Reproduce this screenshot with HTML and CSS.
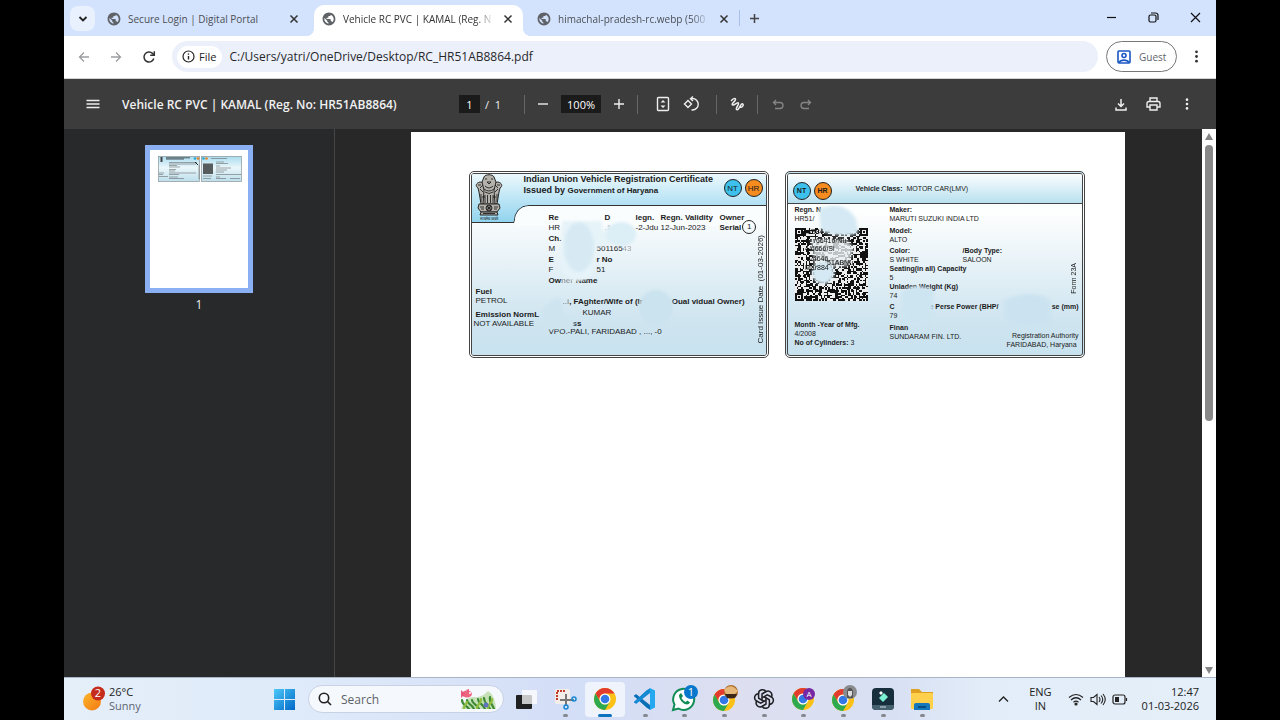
FILE: index.html
```html
<!DOCTYPE html>
<html lang="en">
<head>
<meta charset="utf-8">
<title>Vehicle RC PVC</title>
<link rel="stylesheet" href="styles.css">
</head>
<body>
<svg class="defs" aria-hidden="true">
  <defs>
    <symbol id="globe" viewBox="0 0 24 24"><path fill="#5f6368" d="M12 1C5.9 1 1 5.9 1 12s4.900 11 11 11 11-4.900 11-11S18.100 1 12 1zm-1 18.930c-3.950-.49-7-3.850-7-7.930 0-.62.08-1.210.21-1.790L9 15v1c0 1.100.9 2 2 2v1.930zm6.900-2.540c-.26-.81-1-1.390-1.900-1.390h-1v-3c0-.55-.45-1-1-1H8v-2h2c.55 0 1-.45 1-1V7h2c1.100 0 2-.9 2-2v-.41c2.930 1.190 5 4.060 5 7.410 0 2.080-.8 3.970-2.100 5.390z"/></symbol>
    <symbol id="close" viewBox="0 0 10 10"><path d="M1.500 1.500l7 7M8.500 1.500l-7 7" stroke="currentColor" stroke-width="1.500" fill="none"/></symbol>
    <symbol id="dots" viewBox="0 0 16 16"><g fill="currentColor"><circle cx="8" cy="3" r="1.500"/><circle cx="8" cy="8" r="1.500"/><circle cx="8" cy="13" r="1.500"/></g></symbol>
    <symbol id="chrome" viewBox="0 0 24 24">
      <circle cx="12" cy="12" r="11" fill="#fbc116"/>
      <path d="M2.500 6.500A11 11 0 0 1 21.500 6.500H12A5.500 5.500 0 0 0 7.200 14.800z" fill="#e33b2e"/>
      <path d="M2.500 6.500A11 11 0 0 0 12 23L16.800 14.800A5.500 5.500 0 0 1 7.200 14.800z" fill="#2da94f"/>
      <circle cx="12" cy="12" r="5.500" fill="#fff"/><circle cx="12" cy="12" r="4.300" fill="#3478e8"/>
    </symbol>
  </defs>
</svg>
<div class="desktop">
  <header class="tabstrip">
    <button class="tab-search" aria-label="Search tabs"><svg width="10" height="10" viewBox="0 0 10 10"><path d="M1.500 3l3.500 3.500L8.500 3" fill="none" stroke="#222" stroke-width="1.800"/></svg></button>
    <div class="tab"><svg class="fav"><use href="#globe"/></svg><span class="tab-title">Secure Login | Digital Portal</span><button class="icon-btn tab-close" aria-label="Close tab"><svg width="10" height="10"><use href="#close"/></svg></button></div>
    <div class="tab active"><svg class="fav"><use href="#globe"/></svg><span class="tab-title fade">Vehicle RC PVC | KAMAL (Reg. N</span><button class="icon-btn tab-close" aria-label="Close tab"><svg width="10" height="10"><use href="#close"/></svg></button></div>
    <div class="tab"><svg class="fav"><use href="#globe"/></svg><span class="tab-title fade">himachal-pradesh-rc.webp (500</span><button class="icon-btn tab-close" aria-label="Close tab"><svg width="10" height="10"><use href="#close"/></svg></button></div>
    <button class="icon-btn new-tab" aria-label="New tab"><svg width="11" height="11" viewBox="0 0 11 11"><path d="M5.500 1v9M1 5.500h9" stroke="#444" stroke-width="1.500"/></svg></button>
    <div class="window-controls">
      <button class="icon-btn" aria-label="Minimize"><svg width="11" height="11" viewBox="0 0 11 11"><path d="M1 5.500h9" stroke="#111" stroke-width="1.200"/></svg></button>
      <button class="icon-btn" aria-label="Restore"><svg width="11" height="11" viewBox="0 0 11 11" fill="none" stroke="#111" stroke-width="1.200"><rect x="1" y="3" width="7" height="7" rx="1.500"/><path d="M3 1h4.500a2.500 2.500 0 0 1 2.500 2.500V8"/></svg></button>
      <button class="icon-btn" aria-label="Close"><svg width="11" height="11" viewBox="0 0 11 11"><path d="M1 1l9 9M10 1l-9 9" stroke="#111" stroke-width="1.200"/></svg></button>
    </div>
  </header>

  <div class="addressbar">
    <button class="icon-btn nav" aria-label="Back"><svg width="12" height="12" viewBox="0 0 12 12" fill="none" stroke="#9a9da1" stroke-width="1.300"><path d="M11 6H1.500M6 1.500L1.500 6 6 10.500"/></svg></button>
    <button class="icon-btn nav" aria-label="Forward"><svg width="12" height="12" viewBox="0 0 12 12" fill="none" stroke="#9a9da1" stroke-width="1.300"><path d="M1 6h9.500M6 1.500L10.500 6 6 10.500"/></svg></button>
    <button class="icon-btn nav" aria-label="Reload"><svg width="14" height="14" viewBox="0 0 14 14" fill="none" stroke="#333" stroke-width="1.500"><path d="M11.800 8.500A5 5 0 1 1 10.500 3.400L12 5"/><path d="M12.300 1.200V5.300H8.200"/></svg></button>
    <div class="omnibox">
      <button class="file-chip"><svg width="13" height="13" viewBox="0 0 13 13" fill="none" stroke="#222" stroke-width="1.200"><circle cx="6.500" cy="6.500" r="5.500"/><path d="M6.500 6v3.500M6.500 3.500v1.200" stroke-width="1.400"/></svg>File</button>
      <input class="url" aria-label="Address" value="C:/Users/yatri/OneDrive/Desktop/RC_HR51AB8864.pdf">
    </div>
    <button class="guest"><svg width="14" height="14" viewBox="0 0 14 14" fill="none" stroke="#1a56c4" stroke-width="1.600"><rect x="1" y="1" width="12" height="12" rx="1"/><circle cx="7" cy="5.500" r="2"/><path d="M2 12.500c2-3.200 8-3.200 10 0"/></svg>Guest</button>
    <button class="icon-btn menu" aria-label="Menu"><svg width="15" height="15"><use href="#dots"/></svg></button>
  </div>

  <div class="pdfbar">
    <div class="pdf-left">
      <button class="icon-btn" aria-label="Sidebar"><svg width="14" height="10" viewBox="0 0 14 10"><path d="M.5 1.500h13M.5 5h13M.5 8.500h13" stroke="#eee" stroke-width="1.400"/></svg></button>
      <h1 class="pdf-title">Vehicle RC PVC | KAMAL (Reg. No: HR51AB8864)</h1>
    </div>
    <div class="pdf-mid">
      <input class="page-no" aria-label="Page" value="1"><span class="page-total">/&nbsp; 1</span>
      <i class="sep"></i>
      <button class="icon-btn zoom-btn" aria-label="Zoom out"><svg width="12" height="12" viewBox="0 0 12 12"><path d="M1 6h10" stroke="#eee" stroke-width="1.400"/></svg></button>
      <input class="zoom" aria-label="Zoom level" value="100%">
      <button class="icon-btn zoom-btn" aria-label="Zoom in"><svg width="12" height="12" viewBox="0 0 12 12"><path d="M1 6h10M6 1v10" stroke="#eee" stroke-width="1.400"/></svg></button>
      <i class="sep"></i>
      <button class="icon-btn tool" aria-label="Fit to page"><svg width="14" height="16" viewBox="0 0 14 16" fill="none" stroke="#eee" stroke-width="1.400"><rect x="1.500" y="1.500" width="11" height="13" rx="1"/><path d="M4.500 6.500L7 4l2.500 2.500zM4.500 9.500L7 12l2.500-2.500z" fill="#eee" stroke="none"/></svg></button>
      <button class="icon-btn tool" aria-label="Rotate"><svg width="16" height="16" viewBox="0 0 16 16" fill="none" stroke="#eee" stroke-width="1.400"><path d="M1.500 8L5 4.500 8.500 8 5 11.500z"/><path d="M8 2.500h1.500a5.500 5.500 0 0 1 0 11.500H8.500M10 .5L7.500 2.700 10 5"/></svg></button>
      <i class="sep sep-draw"></i>
      <button class="icon-btn tool small" aria-label="Draw"><svg width="14" height="14" viewBox="0 0 14 14" fill="none" stroke="#eee" stroke-width="1.500" stroke-linecap="round" stroke-linejoin="round"><path d="M1.500 3.500C3 1.500 5.500.8 5.500 2.600S1.800 6 2.200 7.500 5.500 7 7 6s2 .5.800 2.500-2.300 4.300-.5 4.300 3.200-6.300 5-6 .5 3.400-1 3.400H9.500"/></svg></button>
      <i class="sep"></i>
      <button class="icon-btn tool small" aria-label="Undo"><svg width="12" height="11" viewBox="0 0 12 11" fill="none" stroke="#858585" stroke-width="1.300"><path d="M4 1L1.500 3.500 4 6M1.500 3.500H8a3 3 0 0 1 0 6H3"/></svg></button>
      <button class="icon-btn tool small" aria-label="Redo"><svg width="12" height="11" viewBox="0 0 12 11" fill="none" stroke="#858585" stroke-width="1.300"><path d="M8 1l2.500 2.500L8 6M10.500 3.500H4a3 3 0 0 0 0 6h5"/></svg></button>
    </div>
    <div class="pdf-right">
      <button class="icon-btn" aria-label="Download"><svg width="12" height="13" viewBox="0 0 12 13" fill="none" stroke="#eee" stroke-width="1.500"><path d="M6 1v7.500M3 5.500l3 3 3-3M1 9.500V12h10V9.500"/></svg></button>
      <button class="icon-btn" aria-label="Print"><svg width="15" height="14" viewBox="0 0 15 14" fill="none" stroke="#eee" stroke-width="1.400"><path d="M4 4V1h7v3M4 10H1V6.500A2 2 0 0 1 3 4.500h9a2 2 0 0 1 2 2V10h-3"/><path d="M4 8h7v5H4z"/></svg></button>
      <button class="icon-btn light" aria-label="More"><svg width="14" height="14"><use href="#dots"/></svg></button>
    </div>
  </div>

  <main class="viewer">
    <aside class="sidebar">
      <button class="thumb" aria-label="Page 1">
        <svg class="thumb-art" viewBox="0 0 84 26">
          <defs><linearGradient id="tg" x2="0" y2="1"><stop offset="0" stop-color="#a9dcef"/><stop offset=".45" stop-color="#eaf6fa"/><stop offset="1" stop-color="#bddfec"/></linearGradient></defs>
          <g fill="url(#tg)" stroke="#8a9498" stroke-width=".7"><rect x=".4" y=".4" width="41" height="25"/><rect x="43.400" y=".4" width="40" height="25"/></g>
          <path d="M8 1.800h24M8 3h18" stroke="#333" stroke-width=".8"/><path d="M2.500 1h2v5h-2z" fill="#444"/>
          <circle cx="37" cy="2.500" r="1.300" fill="#2aa5cf"/><circle cx="40" cy="2.500" r="1.300" fill="#e68322"/><circle cx="45.500" cy="2.500" r="1.300" fill="#2aa5cf"/><circle cx="48.500" cy="2.500" r="1.300" fill="#e68322"/>
          <path d="M11 6.500h28M11 8h27M11 9.500h8M11 11h11M11 13.500h7M11 15h6M11 17h27M11 18.500h10M11 21h9M11 22.500h15M1 17h5M1 18.500h4M1 20.500h9M53 2.500h16M58 6h8M58 7.500h12M58 10h4M58 12h15M58 14h11M58 16h8M58 18.500h25M58 21h4M58 22.500h10M72 22.500h10M45 20h9M45 22.500h8M41 9v14" stroke="#555" stroke-width=".5"/>
          <rect x="45" y="7.500" width="10" height="10.500" fill="#575d5f"/><path d="M37 6l3 3" stroke="#222"/>
        </svg>
      </button>
      <span class="thumb-label">1</span>
    </aside>

    <section class="canvas">
      <article class="sheet">
        <div class="card front">
          <svg class="card-bg" viewBox="0 0 294 181" preserveAspectRatio="none">
            <defs>
              <linearGradient id="hd" x2="0" y2="1"><stop offset="0" stop-color="#ecf8fd"/><stop offset="1" stop-color="#8fd3ee"/></linearGradient>
              <linearGradient id="bd" x2="0" y2="1"><stop offset=".2" stop-color="#fdfefe"/><stop offset=".8" stop-color="#cfe5f0"/><stop offset="1" stop-color="#c8e2ef"/></linearGradient>
            </defs>
            <rect width="294" height="181" fill="url(#bd)"/>
            <path d="M0 0H294V34H55Q43 35 42 49H0z" fill="url(#hd)"/>
            <path d="M294 31.500H57Q43 32 42 48.500H0" fill="none" stroke="#333" stroke-width="1"/>
            <path d="M294 32H57Q43.500 33 42.500 49V52H294z" fill="#fafdfe"/>
          </svg>
          <div class="card-head">
            <svg class="emblem" viewBox="0 0 28 48">
              <g fill="#b5b2ac" stroke="#262626" stroke-width="1">
                <path d="M5 8C1 9 0 12 3 14l1 4 2 12h5V9z"/><path d="M23 8c4 1 5 4 2 6l-1 4-2 12h-5V9z"/>
                <path d="M9 3c1-3 9-3 10 0l2 5-2 8 1 14H8l1-14-2-8z"/>
                <path d="M4 30h20l1 4-3 4H6l-3-4z"/><path d="M6 38h16l1 3H5z"/>
              </g>
              <g fill="none" stroke="#222" stroke-width=".9">
                <path d="M10 5h2M16 5h2M12 8h4l-2 2zM10 12q4 4 8 0M9 15q5 4 10 0M10 18q4 3 8 0M10 21v8M12.500 21v8M15.500 21v8M18 21v8M3 11h3M22 11h3M5 15l3 3M23 15l-3 3M6 20v8M22 20v8M7 23h3M18 23h3M8 11l-3 3M20 11l3 3"/>
                <circle cx="14" cy="34" r="3"/><path d="M11 34h6M14 31v6M12 32l4 4M16 32l-4 4M5 33h4M6 35h3M19 33h4M19 35h3M8 39.500h12"/>
              </g>
              <text x="14" y="46" text-anchor="middle" class="motto">सत्यमेव जयते</text>
            </svg>
            <div class="card-title"><p class="title-line">Indian Union Vehicle Registration Certificate</p><p class="title-line">Issued by <span class="state">Government of Haryana</span></p></div>
            <span class="badge nt">NT</span><span class="badge hr">HR</span>
          </div>
          <div class="front-body">
            <dl class="fuel">
              <dt>Fuel</dt><dd>PETROL</dd>
              <dt class="second">Emission NormL</dt><dd class="outdent">NOT AVAILABLE</dd>
            </dl>
            <div class="details">
              <div class="line strong"><span class="c1">Re</span><span class="c2">D</span><span class="c3">legn.</span><span class="c4">Regn. Validity</span><span>Owner</span></div>
              <div class="line"><span class="c1">HR</span><span class="c2 faint">.1</span><span class="c3">-2-Jdu</span><span class="c4">12-Jun-2023</span><b>Serial</b><span class="serial">1</span></div>
              <div class="line strong step">Ch.</div>
              <div class="line"><span class="chassis">M</span>501165<span class="faint">43</span></div>
              <div class="line strong step"><span class="chassis">E</span>r No</div>
              <div class="line"><span class="chassis">F</span>51</div>
              <div class="line strong step">Ow<span class="faint">ner</span> Name</div>
              <div class="line strong relation"><span class="faint">..i</span>, FAghter/Wife of (In<span class="gap"></span>Oual vidual Owner)</div>
              <div class="line step kumar">KUMAR</div>
              <div class="line strong address">ss</div>
              <div class="line">VPO.-PALI, FARIDABAD , ..., -0</div>
            </div>
            <span class="issue-date">Card Issue Date &nbsp;(01-03-2026)</span>
          </div>
          <svg class="smudges" viewBox="0 0 300 187"><defs><filter id="soft"><feGaussianBlur stdDeviation="1.500"/></filter></defs><g filter="url(#soft)">
            <path d="M93 50h40v10h30l2 12-35 3-5 6-1 21q-6 10-20 8L92 100z" fill="#e6f3f8"/><ellipse cx="110" cy="76" rx="15" ry="25" fill="#d7eaf4"/><ellipse cx="152" cy="63" rx="15" ry="12" fill="#dceef6"/>
            <path d="M72 140q12-15 20-13l3 18q14 4 9 11l-28 3z" fill="#cee5f0"/><circle cx="187" cy="136" r="17" fill="#cbe3ef"/></g></svg>
        </div>

        <div class="card back">
          <div class="back-head"><span class="badge nt">NT</span><span class="badge hr">HR</span><p class="class-line"><b>Vehicle Class:</b>&nbsp; MOTOR CAR(LMV)</p></div>
          <div class="back-body">
            <div class="back-left">
              <dl class="pair"><dt>Regn. N</dt><dd>HR51/</dd></dl>
              <svg class="qr" viewBox="0 0 48 48" shape-rendering="crispEdges"><path id="qr-path" fill="#111"/></svg>
              <dl class="pair mfg"><dt>Month -Year of Mfg.</dt><dd>4/2008</dd><dd><b>No of Cylinders:</b> 3</dd></dl>
            </div>
            <div class="back-right">
              <dl class="pair"><dt>Maker:</dt><dd>MARUTI SUZUKI INDIA LTD</dd></dl>
              <dl class="pair gap3"><dt>Model:</dt><dd>ALTO</dd></dl>
              <div class="two gap2"><dl class="pair"><dt>Color:</dt><dd>S WHITE</dd></dl><dl class="pair"><dt>/Body Type:</dt><dd>SALOON</dd></dl></div>
              <dl class="pair"><dt>Seating(in all) Capacity</dt><dd>5</dd></dl>
              <dl class="pair"><dt>Unladen Weight (Kg)</dt><dd>74</dd></dl>
              <dl class="pair gap2"><dt class="power"><span class="c-power">C</span><span>e Perse Power (BHP/</span><span class="base">se (mm)</span></dt><dd>79</dd></dl>
              <div class="foot gap3"><dl class="pair"><dt>Finan</dt><dd>SUNDARAM FIN. LTD.</dd></dl><p class="authority">Registration Authority<br>FARIDABAD, Haryana&nbsp;</p></div>
            </div>
            <span class="form">Form 23A</span>
          </div>
          <svg class="smudges" viewBox="0 0 300 187"><g filter="url(#soft)">
            <path d="M34 38q25-10 37 10l2 14q-14 6-37-2z" fill="#d4e9f3"/><path d="M26 68h35l8 9-6 18-33 2z" fill="#e8f0f3" opacity=".8"/><circle cx="38" cy="102" r="11" fill="#d4e9f3"/>
            <path d="M116 122q12-12 32-3v24q-8 20-31 9z" fill="#cde5f1"/><path d="M218 130q30-14 48 0l-1 20q-18 14-44-2z" fill="#cbe3f0"/></g>
            <g class="overprint"><text x="21" y="63">.//884</text><text x="29" y="72">/66416/Nu</text><text x="20" y="80">4/6666/Si</text><text x="22" y="90">4/4646.</text><text x="42" y="94">51ABNu</text><text x="20" y="99">Mar884</text></g></svg>
        </div>
      </article>
    </section>
    <div class="scrollbar"><i class="arrow up"></i><i class="scroll-thumb"></i><i class="arrow down"></i></div>
  </main>

  <footer class="taskbar">
    <div class="weather">
      <svg width="24" height="26" viewBox="0 0 24 26"><defs><linearGradient id="sun" x2="1" y2="1"><stop stop-color="#fbb62b"/><stop offset="1" stop-color="#f27a12"/></linearGradient></defs><circle cx="10" cy="15.500" r="9" fill="url(#sun)"/><circle cx="16" cy="7.500" r="7" fill="#c42b1c"/><text x="16" y="11" text-anchor="middle" class="count">2</text></svg>
      <p class="weather-text">26°C<br><span class="muted">Sunny</span></p>
    </div>
    <button class="icon-btn start" aria-label="Start"><svg width="21" height="21" viewBox="0 0 21 21"><defs><linearGradient id="win" x2="1" y2="1"><stop stop-color="#4cc9f8"/><stop offset="1" stop-color="#0067c8"/></linearGradient></defs><path fill="url(#win)" d="M0 0h10v10H0zM11 0h10v10H11zM0 11h10v10H0zM11 11h10v10H11z"/></svg></button>
    <label class="search"><svg width="14" height="14" viewBox="0 0 14 14" fill="none" stroke="#222" stroke-width="1.600"><circle cx="6" cy="6" r="4.700"/><path d="M9.500 9.500L13 13"/></svg><input class="search-input" aria-label="Search" placeholder="Search">
      <svg width="36" height="20" viewBox="0 0 36 20"><path d="M1 20Q6 7 14 8T28 2q7 4 8 18z" fill="#c5e0b5"/><g fill="none" stroke-width="2.200" stroke-linecap="round"><path d="M9 20C6 16 2 16 2 11M14 20C11 14 7 15 7 11M19 20c-3-6-7-5-7-9M25 20c-3-6-7-6-7-10M30 20c-3-6-6-6-6-11M34 20c-2-6-5-6-4-12" stroke="#3c8a36"/><path d="M4 19c0-3 3-4 3-6M17 19c0-4 5-5 4-9M28 19c0-5 5-5 4-9" stroke="#8fbd3f"/></g><ellipse cx="7" cy="5" rx="5" ry="3.500" fill="#ec6680"/><path d="M1 1l4 4-4 4zM6 1l3-1v3z" fill="#e8587a"/><circle cx="10" cy="4" r="1" fill="#fff"/><circle cx="26" cy="16" r="2.500" fill="#6273bd"/></svg>
    </label>
    <nav class="apps">
      <button class="app plain" aria-label="Task view"><svg width="24" height="24" viewBox="0 0 24 24"><rect x="2" y="8" width="16" height="14" rx="1" fill="#202020"/><rect x="8" y="3" width="15" height="14" fill="#fff" opacity=".75"/></svg></button>
      <button class="app" aria-label="Snipping Tool"><svg width="24" height="24" viewBox="0 0 24 24"><rect x="2" y="2" width="15" height="15" rx="2" fill="#f4eeea"/><path d="M4 13V4h9" stroke="#c43b28" stroke-width="2" stroke-dasharray="2 1" fill="none"/><path d="M13 7v12M7 13h14" stroke="#777" stroke-width="2"/><g fill="none" stroke="#1788d3" stroke-width="1.500"><circle cx="13" cy="20" r="2"/><circle cx="21" cy="12" r="2"/></g></svg></button>
      <button class="app current" aria-label="Chrome"><svg width="24" height="24"><use href="#chrome"/></svg></button>
      <button class="app" aria-label="Visual Studio Code"><svg width="24" height="24" viewBox="0 0 24 24"><path d="M17 2L4 14.500 1.500 16 1 15l13-12zM17 22L4 9.500 1.500 8 1 9l13 12z" fill="#0879c4"/><path d="M17 1l5 2.500v17L17 23z" fill="#25a8ef"/><path d="M1 9l2-2 14 11v5z" fill="#0b6fb8"/><path d="M1 15l2 2L17 6V1z" fill="#1689d5"/></svg></button>
      <button class="app" aria-label="WhatsApp"><svg width="28" height="28" viewBox="0 0 28 28"><path d="M3 25l1.500-5.500A10.500 10.500 0 1 1 8.500 23.500z" fill="#fff" stroke="#128c55" stroke-width="2"/><path d="M9 10l2-2 2 3-1.500 2c1 2 2.500 3 4 4l2-1.500 2.500 2c-1 2-3 2.500-5 1.500-3-1.300-6-5-6-9z" fill="#128c55"/><circle cx="21" cy="7" r="7" fill="#0877cc"/><text x="21" y="11" text-anchor="middle" class="count">1</text></svg></button>
      <button class="app" aria-label="Chrome profile"><svg width="28" height="28" viewBox="0 0 28 28"><use href="#chrome" x="2" y="3" width="24" height="24"/><circle cx="21" cy="7" r="7" fill="#ad6c2c"/><path d="M14 5q7-8 14 1l-3 3H16z" fill="#e5b779"/><path d="M15 9h12l-2 4h-8z" fill="#3b2718"/></svg></button>
      <button class="app" aria-label="ChatGPT"><svg width="24" height="24" viewBox="0 0 24 24" fill="none" stroke="#202124" stroke-width="1.500"><path id="petal" d="M10 13V7l4-2.500a4 4 0 0 1 5 6"/><use href="#petal" transform="rotate(60 12 12)"/><use href="#petal" transform="rotate(120 12 12)"/><use href="#petal" transform="rotate(180 12 12)"/><use href="#petal" transform="rotate(240 12 12)"/><use href="#petal" transform="rotate(300 12 12)"/></svg></button>
      <button class="app" aria-label="Chrome profile A"><svg width="24" height="24" viewBox="0 0 24 24"><use href="#chrome"/><circle cx="18" cy="7" r="6" fill="#7627a3"/><text x="18" y="10" text-anchor="middle" class="initial">A</text></svg></button>
      <button class="app" aria-label="Chrome profile"><svg width="28" height="28" viewBox="0 0 28 28"><use href="#chrome" x="2" y="3" width="24" height="24"/><circle cx="21" cy="7" r="7" fill="#888c8e"/><path d="M18 13V8q0-5 3-5t3 5v5z" fill="#555"/><path d="M19 6h4v4l-2 2-2-2z" fill="#ddd"/></svg></button>
      <button class="app" aria-label="Filmora"><svg width="24" height="24" viewBox="0 0 24 24"><rect x="1" y="1" width="22" height="22" rx="4" fill="#172f3d"/><path d="M8 6l2-2 2 2-2 2z" fill="#fff"/><path d="M8 11l5-5 4 4-5 5z" fill="#7df1d3"/><path d="M1 18h22v1a4 4 0 0 1-4 4H5a4 4 0 0 1-4-4z" fill="#456170"/><path d="M9 20h6" stroke="#d3dce0"/></svg></button>
      <button class="app" aria-label="File Explorer"><svg width="24" height="24" viewBox="0 0 24 24"><path d="M1 2h8l3 3h11v8H1z" fill="#e0a122"/><rect x="1" y="6" width="22" height="16" rx="1" fill="#ffd04c"/><path d="M4 23v-5q0-2 2-2h12q2 0 2 2v5z" fill="#1677bd"/><path d="M8 20h8" stroke="#074d82" stroke-width="2"/></svg></button>
    </nav>
    <div class="tray">
      <button class="icon-btn" aria-label="Hidden icons"><svg width="11" height="8" viewBox="0 0 11 8"><path d="M1 6.500l4.500-4.500L10 6.500" fill="none" stroke="#222" stroke-width="1.300"/></svg></button>
      <p class="lang">ENG<br>IN</p>
      <div class="status">
        <svg width="16" height="13" viewBox="0 0 16 13" fill="none" stroke="#222" stroke-width="1.200"><path d="M1 4.500q7-6 14 0M3 7q5-4.500 10 0M5.500 9.300q2.500-2.300 5 0"/><circle cx="8" cy="11" r="1" fill="#222"/></svg>
        <svg width="16" height="13" viewBox="0 0 16 13" fill="none" stroke="#222" stroke-width="1.100"><path d="M1 4.500h2.500L7 1.500v10L3.500 8.500H1zM9 4q2 2.500 0 5M11 2.500q3.500 4 0 8M13 1q4.500 5.500 0 11"/></svg>
        <svg width="16" height="13" viewBox="0 0 16 13" fill="none" stroke="#222" stroke-width="1.200"><rect x="1" y="2" width="12" height="9" rx="2"/><path d="M14.500 5v3"/><path d="M3 4h4v5H3z" fill="#222" stroke="none"/></svg>
      </div>
      <p class="clock">12:47<br>01-03-2026</p>
    </div>
  </footer>
</div>
<script src="qr.js"></script>
</body>
</html>
```

FILE: styles.css
```css
* { box-sizing: border-box; }
body { margin: 0; background: #000; font-family: "Open Sans", "Noto Sans", sans-serif; }
p, dl, dd, h1 { margin: 0; }
button, input { font-family: inherit; border: 0; padding: 0; background: none; min-width: 0; }
svg { display: block; flex: none; }
.defs { position: absolute; width: 0; height: 0; }
.desktop { height: 100vh; margin: 0 5%; display: flex; flex-direction: column; overflow: hidden; background: #fff; }
.icon-btn { display: flex; align-items: center; justify-content: center; flex: none; color: #333; }

.tabstrip { display: flex; align-items: flex-end; height: 36px; flex: none; background: #d3e2fd; }
.tab-search { width: 25px; height: 25px; margin: 0 6px 5px; border-radius: 8px; background: #e9f0fe; display: grid; place-items: center; flex: none; }
.tab { width: 208px; height: 31px; display: flex; align-items: center; padding: 0 7px 4px 6px; min-width: 0; }
.tab.active { position: relative; background: #fff; border-radius: 10px 10px 0 0; width: 209px; margin-right: 8px; margin-left: 5px; padding-left: 8px; }
.active::before, .active::after { content: ""; position: absolute; bottom: 0; width: 8px; height: 8px; }
.active::before { right: 100%; background: radial-gradient(circle at 0 0, transparent 8px, #fff 8px); }
.active::after { left: 100%; background: radial-gradient(circle at 100% 0, transparent 8px, #fff 8px); }
.fav { width: 14px; height: 14px; margin-right: 7px; }
.tab-title { flex: 1; font-size: 10px; color: #4b4f54; white-space: nowrap; }
.active .tab-title { color: #333; }
.fade { mask-image: linear-gradient(90deg, #000 88%, transparent); }
.tab-close { width: 16px; height: 16px; margin-left: 6px; }
.new-tab { height: 16px; margin: 0 0 10px; padding: 0 9px; border-left: 1px solid #a9c0ea; }
.window-controls { margin-left: auto; display: flex; height: 35px; gap: 31px; padding-right: 15px; align-self: flex-start; }

.addressbar { height: 43px; flex: none; display: flex; align-items: center; padding: 0 12px 1px 14px; border-bottom: 1px solid #d4d4d4; }
.nav { width: 12px; margin-right: 20px; }
.nav + .nav + .nav { width: 14px; margin-right: 16px; }
.omnibox { flex: 1; display: flex; align-items: center; height: 31px; border-radius: 16px; background: #ecf0fa; padding: 0 5px; min-width: 0; }
.file-chip { display: flex; align-items: center; gap: 4px; height: 22px; padding: 0 6px 0 5px; border-radius: 11px; background: #fff; font-size: 11px; font-weight: 500; color: #222; }
.url { flex: 1; margin-left: 7px; font-size: 12px; color: #27282b; }
.guest { display: flex; align-items: center; gap: 8px; height: 31px; width: 71px; margin-left: 8px; padding: 0 10px; border: 1px solid #777; border-radius: 16px; font-size: 10px; color: #5f6368; }
.menu { margin-left: 12px; width: 15px; }

.pdfbar { height: 50px; flex: none; background: #3c3c3c; display: flex; align-items: center; color: #f1f1f1; padding: 0 22px; }
.pdf-left { display: flex; align-items: center; gap: 22px; flex: 1 0 373px; max-width: 373px; }
.pdf-title { font-size: 12px; font-weight: 600; white-space: nowrap; }
.pdf-mid { display: flex; align-items: center; }
.page-no, .zoom { height: 18px; background: #1b1b1b; color: #fff; text-align: center; font-size: 11px; font-weight: 500; }
.page-no { width: 21px; }
.zoom { width: 40px; }
.page-total { font-size: 11px; margin: 0 23px 0 5px; }
.sep { width: 1px; height: 19px; background: #666; flex: none; }
.zoom-btn { width: 36px; }
.pdf-mid .sep + .tool { margin-left: 11px; }
.tool { width: 28px; }
.sep-draw { margin-left: 11px; }
.tool + .sep:not(.sep-draw) { margin-left: 6px; }
.pdf-mid .sep + .tool.small { margin-left: 6px; }
.pdf-right { margin-left: auto; display: flex; align-items: center; gap: 19px; }
.light { color: #eee; }

.viewer { flex: 1; min-height: 0; display: flex; background: #282828; }
.sidebar { width: 271px; flex: none; border-right: 1px solid #464646; background: #28292a; display: flex; flex-direction: column; align-items: center; padding-top: 16px; }
.thumb { width: 108px; height: 148px; background: #fff; border: 5px solid #8ab0f3; display: flex; align-items: flex-start; padding: 6px 6px 0 8px; }
.thumb-art { width: 84px; height: 26px; }
.thumb-label { color: #eee; font-size: 12px; line-height: 24px; }
.canvas { flex: 1; min-width: 0; display: flex; justify-content: center; padding: 3px 2px 0 0; overflow: hidden; }
.sheet { width: 714px; flex: none; background: #fff; display: flex; align-items: flex-start; gap: 16px; padding: 39px 40px 0 58px; font-family: "Liberation Sans", Arial, sans-serif; }
.scrollbar { width: 14px; flex: none; background: #fff; display: flex; flex-direction: column; align-items: center; padding: 4px 0 3px; gap: 5px; }
.arrow { border: 4px solid transparent; }
.up { border-bottom: 7px solid #868686; border-top: 0; }
.down { border-top: 7px solid #868686; border-bottom: 0; margin-top: auto; }
.scroll-thumb { width: 8px; height: 51%; border-radius: 4px; background: #888; }

.card { position: relative; width: 300px; height: 187px; border: 3px double #444; border-radius: 5px; color: #1b1b1b; font-size: 7px; line-height: 9px; white-space: nowrap; overflow: hidden; display: flex; flex-direction: column; flex: none; }
.card.front { font-size: 8px; }
.card-bg { position: absolute; inset: 0; width: 100%; height: 100%; }
.smudges { position: absolute; top: -3px; left: -3px; width: 300px; height: 187px; }
.card-head { position: relative; display: flex; align-items: flex-start; height: 39px; padding-left: 2px; }
.emblem { width: 30px; height: 48px; }
.motto { font-size: 4px; }
.card-title { flex: 1; min-width: 0; margin-left: 20px; }
.title-line { font-size: 9px; line-height: 11px; font-weight: 700; }
.state { font-size: 8px; }
.badge { width: 18px; height: 18px; border: 1px solid #222; border-radius: 50%; display: grid; place-items: center; font-size: 8px; flex: none; }
.nt { background: #3dc0ec; }
.hr { background: #f68c1f; margin-left: 3px; }
.card-head .badge { margin-top: 5px; }
.card-head .hr { margin-right: 3px; }
.front-body { position: relative; flex: 1; display: flex; }
.fuel { width: 77px; flex: none; padding: 74px 0 0 4px; line-height: 9px; }
.fuel dt, .pair dt { font-weight: 700; }
.second { margin-top: 5px; }
.outdent { margin-left: -2px; }
.details { flex: 1; min-width: 0; line-height: 10px; }
.line { display: flex; height: 10px; white-space: pre; }
.strong { font-weight: 700; }
.step { margin-top: 1px; }
.line span { flex: none; }
.c1 { width: 56px; }
.c2 { width: 31px; }
.c3 { width: 25px; }
.c4 { width: 59px; }
.chassis { width: 48px; }
.serial { width: 14px; height: 14px; margin: -3px 0 0 1px; border: 1px solid #222; border-radius: 50%; display: grid; place-items: center; }
.faint { opacity: .4; }
.relation { margin-top: 11px; padding-left: 14px; }
.gap { width: 27px; }
.kumar { padding-left: 34px; }
.address { height: 8px; padding-left: 24px; margin-top: 1px; }
.issue-date { position: absolute; right: 1px; bottom: 12px; writing-mode: vertical-rl; transform: rotate(180deg); line-height: 9px; }

.back { background: linear-gradient(#fdfefe 22%, #cfe5f0 80%, #c8e2ef); }
.back-head { height: 30px; flex: none; display: flex; align-items: center; padding: 4px 0 0 5px; border-bottom: 1px solid #444; background: linear-gradient(#fbfeff, #b9e0ef); }
.back-head .badge { font-weight: 700; font-size: 7px; }
.class-line { margin: -5px 0 0 24px; }
.back-body { flex: 1; position: relative; display: flex; padding: 1px 3px 0 7px; }
.back-left { width: 95px; flex: none; }
.back-right { flex: 1; min-width: 0; }
.qr { width: 73px; height: 73px; margin-top: 5px; background: #eee; }
.mfg { margin-top: 19px; }
.gap2 { margin-top: 2px; }
.gap3 { margin-top: 3px; }
.two { display: grid; grid-template-columns: 73px 1fr; }
.power { display: flex; }
.c-power { width: 40px; }
.base { margin-left: auto; }
.foot { display: flex; justify-content: space-between; }
.authority { text-align: right; padding-top: 8px; }
.form { position: absolute; right: 4px; top: 59px; writing-mode: vertical-rl; transform: rotate(180deg); }
.overprint { font-size: 7px; fill: #111; }

.taskbar { height: 43px; flex: none; display: flex; align-items: center; border-top: 1px solid #a9b4c6; background: linear-gradient(90deg, #e5eff9, #dfeafa 20%, #d3def7 45%, #dddff0 58%, #d8e0f3 72%, #e2edf9 80%, #e5eff9); color: #222; font-size: 11px; line-height: 14px; }
.weather { width: 204px; flex: none; display: flex; gap: 3px; align-items: center; padding-left: 18px; }
.muted { color: #5c6470; }
.count { font: 11px "Open Sans", sans-serif; fill: #fff; }
.initial { font: 8px "Open Sans", sans-serif; fill: #fff; }
.start { width: 32px; margin-right: 8px; }
.search { width: 196px; height: 28px; flex: none; display: flex; align-items: center; gap: 9px; padding: 0 7px 0 9px; border-radius: 14px; background: #f5f8fd; border: 1px solid #c9d2e5; }
.search-input { flex: 1; width: 0; font-size: 12px; color: #333; }
.search-input::placeholder { color: #5d6268; opacity: 1; }
.apps { width: 436px; margin-left: 2px; display: flex; flex: none; }
.app { flex: 1; height: 35px; display: grid; place-items: center; position: relative; border-radius: 4px; }
.app::after { content: ""; position: absolute; bottom: 0; left: 50%; width: 5px; height: 3px; margin-left: -2px; border-radius: 2px; background: #85898f; }
.plain::after { content: none; }
.current { background: #eff3fc; }
.current::after { width: 14px; margin-left: -7px; background: #0b72bd; }
.tray { margin-left: auto; display: flex; align-items: center; padding-right: 17px; }
.lang { text-align: center; margin-left: 20px; }
.status { display: flex; gap: 6px; margin: 0 14px 0 16px; }
.clock { text-align: right; }
```

FILE: qr.js
```js
// Fills the decorative code block with a repeatable speckle and three corner markers.
const size = 48;
let seed = 7;
const next = () => (seed = (seed * 16807) % 2147483647) / 2147483647;
const corners = [[0, 0], [size - 5, 0], [0, size - 5]];
let d = "";
for (let y = 0; y < size; y++) {
  for (let x = 0; x < size; x++) {
    const r = next();
    const c = corners.find(([cx, cy]) => x >= cx && x < cx + 5 && y >= cy && y < cy + 5);
    let on = r < 0.55;
    if (c) {
      const ring = Math.max(Math.abs(x - c[0] - 2), Math.abs(y - c[1] - 2));
      on = ring !== 1;
    }
    if (on) d += `M${x} ${y}h1v1h-1z`;
  }
}
document.getElementById("qr-path").setAttribute("d", d);
```
